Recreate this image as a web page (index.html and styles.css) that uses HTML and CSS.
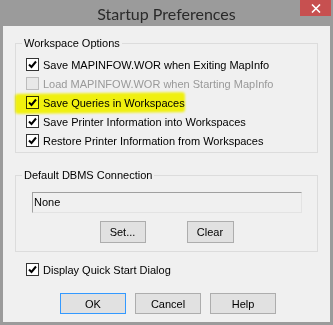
FILE: index.html
```html
<!DOCTYPE html>
<html lang="en">
<head>
  <meta charset="UTF-8">
  <title>Startup Preferences</title>
  <link rel="stylesheet" href="styles.css">
</head>
<body>
  <div class="window">
    <div class="titlebar">
      <span class="title">Startup Preferences</span>
      <button class="close" aria-label="Close">
        <svg width="10" height="9" viewBox="0 0 10 9"><path d="M1 0.5 L9 8.5 M9 0.5 L1 8.5" stroke="#fff" stroke-width="1.6" fill="none"/></svg>
      </button>
    </div>

    <div class="dialog">
      <fieldset class="group">
        <legend>Workspace Options</legend>
        <div class="rows">
          <label class="opt"><span class="box"><svg viewBox="0 0 11 11"><path d="M2 5.5 L4.5 8 L9 2.5" /></svg></span>Save MAPINFOW.WOR when Exiting MapInfo</label>
          <label class="opt disabled"><span class="box"></span>Load MAPINFOW.WOR when Starting MapInfo</label>
          <label class="opt marked"><span class="box"><svg viewBox="0 0 11 11"><path d="M2 5.5 L4.5 8 L9 2.5" /></svg></span>Save Queries in Workspaces</label>
          <label class="opt"><span class="box"><svg viewBox="0 0 11 11"><path d="M2 5.5 L4.5 8 L9 2.5" /></svg></span>Save Printer Information into Workspaces</label>
          <label class="opt"><span class="box"><svg viewBox="0 0 11 11"><path d="M2 5.5 L4.5 8 L9 2.5" /></svg></span>Restore Printer Information from Workspaces</label>
        </div>
      </fieldset>

      <fieldset class="group dbms">
        <legend>Default DBMS Connection</legend>
        <div class="field">None</div>
        <div class="dbms-buttons">
          <button class="btn set">Set...</button>
          <button class="btn clear">Clear</button>
        </div>
      </fieldset>

      <label class="opt quick"><span class="box"><svg viewBox="0 0 11 11"><path d="M2 5.5 L4.5 8 L9 2.5" /></svg></span>Display Quick Start Dialog</label>

      <div class="actions">
        <button class="btn wide default">OK</button>
        <button class="btn wide">Cancel</button>
        <button class="btn wide">Help</button>
      </div>
    </div>
  </div>
</body>
</html>
```

FILE: styles.css
```css
body {
  margin: 0;
  background: #9b9b9b;
  font-family: "Liberation Sans", Arial, sans-serif;
  font-size: 11px;
  color: #000;
}
.window {
  width: 333px;
  height: 325px;
  box-sizing: border-box;
  background: #9b9b9b;
  padding: 0 3px 3px;
}
.titlebar {
  height: 26px;
  display: grid;
  grid-template-columns: 1fr auto 1fr;
  align-items: center;
  margin: 0 -3px;
}
.title {
  grid-column: 2;
  font-family: Lato, sans-serif;
  font-size: 16px;
  color: #2a2a2a;
  padding-top: 1px;
}
.close {
  grid-column: 3;
  justify-self: end;
  align-self: start;
  width: 31px;
  height: 16px;
  margin-right: 2px;
  border: 0;
  padding: 0;
  background: #c75050;
  display: flex;
  align-items: center;
  justify-content: center;
}
.dialog {
  height: 296px;
  box-sizing: border-box;
  background: #f0f0f0;
  padding: 10px 12px 0;
}
.group {
  margin: 0;
  padding: 0;
  border: 1px solid #dcdcdc;
  min-width: 0;
}
.group legend {
  margin-left: 6px;
  padding: 0 2px;
  line-height: 14px;
}
.rows {
  padding: 5px 0 2px 10px;
}
.opt {
  display: flex;
  align-items: center;
  gap: 4px;
  height: 19px;
  white-space: nowrap;
  position: relative;
}
.box {
  width: 11px;
  height: 11px;
  border: 1px solid #333;
  background: #fff;
  flex-shrink: 0;
}
.box svg {
  display: block;
  width: 11px;
  height: 11px;
  fill: none;
  stroke: #000;
  stroke-width: 2;
}
.opt.disabled {
  color: #999;
}
.opt.disabled .box {
  border-color: #bcbcbc;
  background: #e8e8e8;
}
.opt.marked::after {
  content: "";
  position: absolute;
  left: -11px;
  top: 0;
  width: 170px;
  height: 20px;
  background: #ffff10;
  border-radius: 3px;
  filter: blur(1px);
  mix-blend-mode: multiply;
  transform: rotate(-0.6deg);
}
.dbms {
  margin-top: 15px;
}
.field {
  margin: 10px 15px 0 16px;
  height: 19px;
  line-height: 19px;
  padding-left: 1px;
  border: 1px solid;
  border-color: #a0a0a0 #e3e3e3 #e3e3e3 #a0a0a0;
  background: #f0f0f0;
}
.dbms-buttons {
  display: flex;
  justify-content: center;
  gap: 41px;
  margin: 8px 0 8px;
}
.btn {
  font-family: "Liberation Sans", Arial, sans-serif;
  font-size: 11px;
  color: #000;
  background: #e1e1e1;
  border: 1px solid #adadad;
  height: 22px;
  padding: 0;
}
.set {
  width: 46px;
}
.clear {
  width: 47px;
}
.quick {
  margin: 8px 0 0 11px;
}
.actions {
  display: flex;
  gap: 9px;
  margin-top: 14px;
  padding-left: 45px;
}
.btn.wide {
  width: 66px;
  height: 21px;
}
.btn.default {
  border-color: #3399ff;
}
```
